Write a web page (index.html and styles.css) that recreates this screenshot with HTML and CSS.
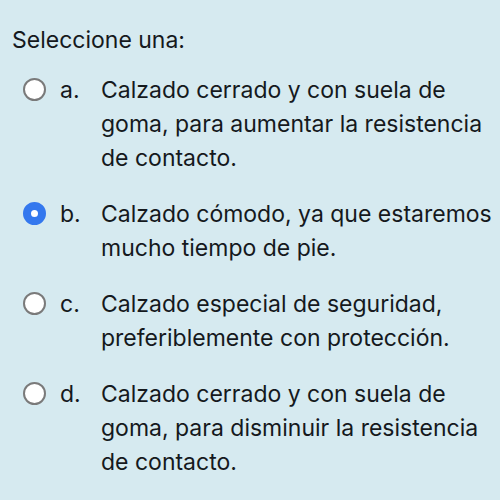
FILE: index.html
```html
<!DOCTYPE html>
<html lang="es">
<head>
<meta charset="utf-8">
<link rel="stylesheet" href="styles.css">
</head>
<body>
<div class="question">
  <div class="prompt">Seleccione una:</div>
  <div class="answers">
    <div class="opt">
      <span class="radio"></span>
      <span class="letter">a.</span>
      <span class="text">Calzado cerrado y con suela de goma, para aumentar la resistencia de contacto.</span>
    </div>
    <div class="opt">
      <span class="radio checked"></span>
      <span class="letter">b.</span>
      <span class="text">Calzado cómodo, ya que estaremos mucho tiempo de pie.</span>
    </div>
    <div class="opt">
      <span class="radio"></span>
      <span class="letter">c.</span>
      <span class="text">Calzado especial de seguridad, preferiblemente con protección.</span>
    </div>
    <div class="opt">
      <span class="radio"></span>
      <span class="letter">d.</span>
      <span class="text">Calzado cerrado y con suela de goma, para disminuir la resistencia de contacto.</span>
    </div>
  </div>
</div>
</body>
</html>
```
FILE: styles.css
```css
html, body {
  margin: 0;
  padding: 0;
  background: #d6eaf0;
}
body {
  width: 500px;
  height: 500px;
  overflow: hidden;
  font-family: Inter, "Liberation Sans", Arial, sans-serif;
  color: #15191d;
  font-size: 23px;
  line-height: 34px;
}
.question {
  padding: 23px 0 0 12px;
}
.prompt {
  margin-bottom: 16px;
}
.answers {
  display: flex;
  flex-direction: column;
  gap: 22px;
}
.opt {
  display: flex;
  align-items: flex-start;
}
.radio {
  flex: none;
  width: 19px;
  height: 19px;
  border: 2px solid #7a7a7a;
  border-radius: 50%;
  background: #fff;
  margin: 5px 0 0 11px;
  box-sizing: content-box;
}
.radio.checked {
  width: 7px;
  height: 7px;
  border: 8px solid #3478ee;
}
.letter {
  flex: none;
  width: 41px;
  margin-left: 14px;
}
.text {
  width: 395px;
}
```
